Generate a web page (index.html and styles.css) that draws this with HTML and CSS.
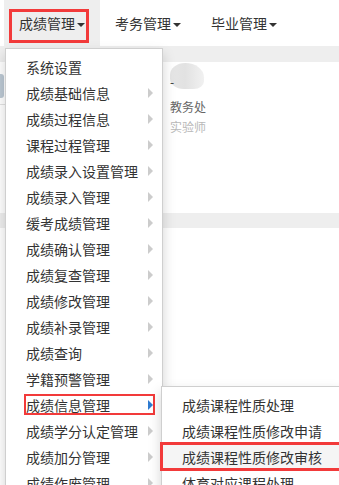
FILE: index.html
```html
<!DOCTYPE html>
<html lang="zh-CN">
<head>
<meta charset="utf-8">
<title>成绩管理</title>
<link rel="stylesheet" href="styles.css">
</head>
<body>
<div class="page">
  <nav class="topnav">
    <div class="tab active marked">成绩管理<span class="caret"></span></div>
    <div class="tab">考务管理<span class="caret"></span></div>
    <div class="tab">毕业管理<span class="caret"></span></div>
  </nav>
  <div class="band"></div>
  <div class="content">
    <div class="side">
      <div class="side-icon"></div>
      <div class="side-line"></div>
    </div>
    <div class="profile">
      <div class="avatar"></div>
      <div class="pname">-</div>
      <div class="pdept">教务处</div>
      <div class="ptitle">实验师</div>
    </div>
  </div>
  <div class="band band2"></div>

  <ul class="menu">
    <li class="item">系统设置</li>
    <li class="item sub">成绩基础信息</li>
    <li class="item sub">成绩过程信息</li>
    <li class="item sub">课程过程管理</li>
    <li class="item sub">成绩录入设置管理</li>
    <li class="item sub">成绩录入管理</li>
    <li class="item sub">缓考成绩管理</li>
    <li class="item sub">成绩确认管理</li>
    <li class="item sub">成绩复查管理</li>
    <li class="item sub">成绩修改管理</li>
    <li class="item sub">成绩补录管理</li>
    <li class="item sub">成绩查询</li>
    <li class="item sub">学籍预警管理</li>
    <li class="item sub open">
      <span class="mark-box"></span>成绩信息管理
      <ul class="menu submenu">
        <li class="item">成绩课程性质处理</li>
        <li class="item">成绩课程性质修改申请</li>
        <li class="item hover"><span class="mark-box big"></span>成绩课程性质修改审核</li>
        <li class="item">体育对应课程处理</li>
      </ul>
    </li>
    <li class="item sub">成绩学分认定管理</li>
    <li class="item sub">成绩加分管理</li>
    <li class="item sub">成绩作废管理</li>
  </ul>
</div>
</body>
</html>
```

FILE: styles.css
```css
html, body {
  margin: 0;
  padding: 0;
  width: 339px;
  height: 485px;
  overflow: hidden;
  background: #fff;
}

.page {
  position: relative;
  width: 339px;
  height: 485px;
  overflow: hidden;
  font-family: "Noto Sans CJK SC", "Noto Sans", sans-serif;
  font-size: 14px;
  color: #333;
}

.topnav {
  display: flex;
  height: 46px;
  padding-left: 4px;
  background: #fff;
}

.tab {
  position: relative;
  width: 96px;
  box-sizing: border-box;
  padding-left: 15px;
  line-height: 46px;
  white-space: nowrap;
  color: #333;
}

.tab.active {
  background: #eeeeee;
}

.tab.marked::after {
  content: "";
  position: absolute;
  left: 5px;
  top: 9px;
  width: 80px;
  height: 34px;
  box-sizing: border-box;
  border: 3px solid #f23a3a;
}

.caret {
  display: inline-block;
  width: 0;
  height: 0;
  margin-left: 2px;
  vertical-align: middle;
  border-top: 4px solid #333;
  border-left: 4px solid transparent;
  border-right: 4px solid transparent;
}

.band {
  height: 16px;
  background: #eeeeee;
}

.band2 {
  height: 15px;
}

.content {
  display: flex;
  height: 151px;
}

.side {
  width: 170px;
  flex: none;
  padding-top: 12px;
  box-sizing: border-box;
}

.side-icon {
  width: 4px;
  height: 24px;
  background: #bcc8d3;
  border-radius: 0 3px 3px 0;
}

.side-line {
  width: 6px;
  margin-top: 6px;
  border-top: 1px solid #e2e2e2;
}

.profile {
  position: relative;
  padding-top: 12px;
  font-size: 12px;
}

.avatar {
  position: absolute;
  left: 0;
  top: 1px;
  width: 34px;
  height: 26px;
  border-radius: 45% 55% 30% 40%;
  background: linear-gradient(90deg, #e6e6e6 0%, #e2e2e2 45%, #f1f1f1 100%);
}

.pname {
  position: relative;
  line-height: 16px;
  margin-bottom: 7px;
  color: #333;
}

.pdept {
  line-height: 20px;
  color: #666;
}

.ptitle {
  line-height: 20px;
  color: #b8b8b8;
}

/* dropdown */
.menu {
  position: absolute;
  left: 5px;
  top: 48px;
  width: 158px;
  box-sizing: border-box;
  margin: 0;
  padding: 5px 0;
  list-style: none;
  background: #fff;
  border: 1px solid #cfcfcf;
  box-shadow: 0 6px 12px rgba(0, 0, 0, 0.175);
}

.item {
  position: relative;
  padding: 3px 20px;
  line-height: 20px;
  white-space: nowrap;
  color: #333;
}

.item.sub::after {
  content: "";
  position: absolute;
  right: 9px;
  top: 8px;
  width: 0;
  height: 0;
  border-top: 5px solid transparent;
  border-bottom: 5px solid transparent;
  border-left: 5px solid #cccccc;
}

.item.open::after {
  border-left-color: #2e7bd1;
}

.mark-box {
  position: absolute;
  left: 18px;
  top: 2px;
  width: 131px;
  height: 21px;
  box-sizing: border-box;
  border: 2px solid #f23a3a;
}

.submenu {
  left: 100%;
  top: -6px;
  margin-left: -1px;
  width: 182px;
  z-index: 2;
}

.item.hover {
  background: #f5f5f5;
}

.mark-box.big {
  left: -2px;
  top: -2px;
  width: 182px;
  height: 29px;
  border-width: 3px;
}
```
